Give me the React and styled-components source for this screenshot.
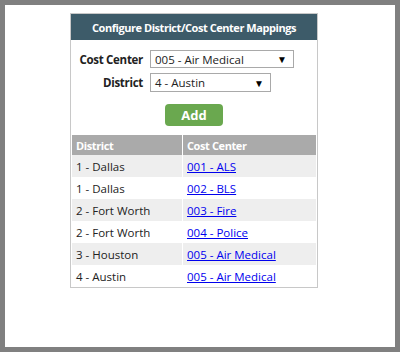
import React from 'react'
import styled, { createGlobalStyle } from 'styled-components'

const GlobalStyle = createGlobalStyle`
  html, body { margin: 0; padding: 0; background: #fff; }
  body { font-family: "Open Sans", "Liberation Sans", sans-serif; }
`

const color = {
  frame: '#808080',
  border: '#c8c8c8',
  header: '#3d5b69',
  tableHead: '#aaaaaa',
  stripe: '#eeeeee',
  green: '#6aa84f',
  link: '#0000ee',
  text: '#222'
}

const rows = [
  { district: '1 - Dallas', center: '001 - ALS' },
  { district: '1 - Dallas', center: '002 - BLS' },
  { district: '2 - Fort Worth', center: '003 - Fire' },
  { district: '2 - Fort Worth', center: '004 - Police' },
  { district: '3 - Houston', center: '005 - Air Medical' },
  { district: '4 - Austin', center: '005 - Air Medical' }
]

const Frame = styled.div`
  box-sizing: border-box;
  height: 352px;
  border: 5px solid ${color.frame};
  padding: 8px 0 0 65px;
`

const Panel = styled.div`
  width: 246px;
  border: 1px solid ${color.border};
  background: #fff;
`

const Header = styled.div`
  height: 26px;
  background: ${color.header};
  color: #fff;
  font-weight: bold;
  font-size: 11px;
  letter-spacing: -0.45px;
  display: flex;
  align-items: center;
  justify-content: center;
`

const Form = styled.div`
  display: grid;
  grid-template-columns: 72px auto;
  column-gap: 7px;
  row-gap: 5px;
  padding-top: 10px;
  align-items: center;
`

const Label = styled.label`
  text-align: right;
  font-size: 11.5px;
  font-weight: bold;
  letter-spacing: -0.3px;
  color: ${color.text};
`

const SelectBox = styled.div`
  box-sizing: border-box;
  width: ${p => p.$w}px;
  height: ${p => p.$h}px;
  border: 1px solid #a9a9a9;
  display: flex;
  align-items: center;
  justify-content: space-between;
  padding: 0 6px 0 4px;
  font-size: 11.5px;
  color: ${color.text};
`

const Arrow = styled.span`
  font-size: 10px;
  color: #000;
`

const ButtonRow = styled.div`
  display: flex;
  justify-content: center;
  margin-top: 12px;
`

const AddButton = styled.button`
  width: 58px;
  height: 22px;
  border: none;
  border-radius: 4px;
  background: ${color.green};
  color: #fff;
  font-family: inherit;
  font-weight: bold;
  font-size: 13px;
  padding: 0;
`

const Table = styled.table`
  width: 100%;
  margin-top: 9px;
  border-collapse: separate;
  border-spacing: 1px 0;
  font-size: 11.5px;
`

const Th = styled.th`
  background: ${color.tableHead};
  color: #fff;
  font-size: 11px;
  font-weight: bold;
  text-align: left;
  height: 20px;
  padding: 0 0 0 4px;
  letter-spacing: -0.4px;
  width: ${p => p.$w || 'auto'};
`

const Tr = styled.tr`
  background: ${p => (p.$odd ? color.stripe : '#fff')};
`

const Td = styled.td`
  height: 22px;
  padding: 0 0 0 4px;
  color: ${color.text};
`

const Link = styled.a`
  color: ${color.link};
  text-decoration: underline;
`

function Select({ value, w, h }) {
  return (
    <SelectBox $w={w} $h={h}>
      <span>{value}</span>
      <Arrow>▼</Arrow>
    </SelectBox>
  )
}

export default function App() {
  return (
    <>
      <GlobalStyle />
      <Frame>
        <Panel>
          <Header>Configure District/Cost Center Mappings</Header>
          <Form>
            <Label>Cost Center</Label>
            <Select value="005 - Air Medical" w={144} h={18} />
            <Label>District</Label>
            <Select value="4 - Austin" w={121} h={19} />
          </Form>
          <ButtonRow>
            <AddButton>Add</AddButton>
          </ButtonRow>
          <Table>
            <thead>
              <tr>
                <Th $w="106px">District</Th>
                <Th>Cost Center</Th>
              </tr>
            </thead>
            <tbody>
              {rows.map((r, i) => (
                <Tr key={i} $odd={i % 2 === 0}>
                  <Td>{r.district}</Td>
                  <Td><Link href="#">{r.center}</Link></Td>
                </Tr>
              ))}
            </tbody>
          </Table>
        </Panel>
      </Frame>
    </>
  )
}
